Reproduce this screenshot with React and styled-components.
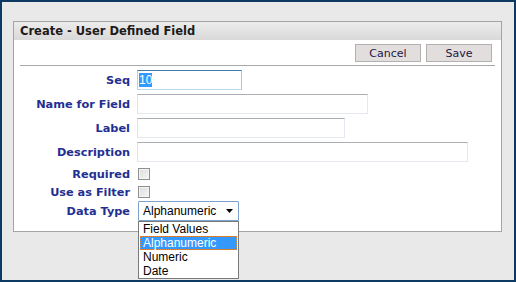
import React from "react";
import styled, { createGlobalStyle } from "styled-components";

const GlobalStyle = createGlobalStyle`
  html, body {
    margin: 0;
    padding: 0;
  }
  body {
    width: 516px;
    height: 282px;
    overflow: hidden;
  }
`;

const Frame = styled.div`
  box-sizing: border-box;
  width: 516px;
  height: 282px;
  border: 2px solid #0d3a62;
  background: #e9e9e9;
  padding: 19px 12px 0 11px;
`;

const Panel = styled.div`
  box-sizing: border-box;
  height: 211px;
  border: 1px solid #a4a4a4;
  background: #fff;
  font-family: "DejaVu Sans", Verdana, sans-serif;
`;

const TitleBar = styled.div`
  height: 18px;
  padding-left: 6px;
  display: flex;
  align-items: center;
  background: linear-gradient(#ececec, #d9d9d9);
  font-size: 11.5px;
  font-weight: bold;
  color: #1d1a17;
`;

const ButtonBar = styled.div`
  display: flex;
  justify-content: flex-end;
  gap: 5px;
  margin: 0 6px;
  padding: 4px 3px 3px 0;
  border-bottom: 1px solid #a8a8a8;
`;

const Button = styled.button`
  box-sizing: border-box;
  width: ${(p) => p.$w}px;
  height: 18px;
  padding: 0;
  border: 1px solid #b3b0b0;
  background: #e2dede;
  font-family: "DejaVu Sans", Verdana, sans-serif;
  font-size: 11px;
  color: #24163f;
`;

const Form = styled.div`
  display: flex;
  flex-direction: column;
  padding-top: 4px;
`;

const Row = styled.div`
  display: flex;
  align-items: center;
  height: ${(p) => p.$h}px;
  margin-top: ${(p) => p.$mt || 0}px;
`;

const Label = styled.div`
  width: 116px;
  margin-right: ${(p) => (p.$wide ? 8 : 7)}px;
  text-align: right;
  font-size: 11.3px;
  font-weight: bold;
  color: #1f3092;
`;

const TextBox = styled.input`
  box-sizing: border-box;
  width: ${(p) => p.$w}px;
  height: 20px;
  margin: 0;
  padding: 0 2px;
  border: 1px solid;
  border-color: #abadb3 #e3e9ef #e3e9ef #e2e3ea;
  outline: none;
  font-family: "Liberation Sans", Arial, sans-serif;
  font-size: 12px;
`;

const FocusBox = styled.div`
  box-sizing: border-box;
  width: ${(p) => p.$w}px;
  height: 20px;
  padding: 1px 1px;
  border: 1px solid;
  border-color: #3d7bad #a4c9e3 #b7d9ed #b5cfe7;
  display: flex;
  align-items: center;
  font-family: "Liberation Sans", Arial, sans-serif;
  font-size: 12px;
`;

const Selected = styled.span`
  background: #3399ff;
  color: #fff;
  line-height: 14px;
`;

const Check = styled.span`
  box-sizing: border-box;
  display: inline-block;
  width: 12px;
  height: 12px;
  border: 1px solid #8e8f8f;
  background: linear-gradient(135deg, #dcdcdc, #f6f6f6);
  box-shadow: inset 0 0 0 1px #f4f4f4;
`;

const SelectWrap = styled.div`
  position: relative;
`;

const SelectBox = styled.div`
  box-sizing: border-box;
  width: 101px;
  height: 20px;
  border: 1px solid #7da2ce;
  border-radius: 1px;
  display: flex;
  align-items: center;
  justify-content: space-between;
  padding: 0 5px 0 4px;
  font-family: "Liberation Sans", Arial, sans-serif;
  font-size: 12px;
  color: #000;
  background: #fff;
`;

const List = styled.div`
  position: absolute;
  top: 20px;
  left: 0;
  box-sizing: border-box;
  width: 101px;
  border: 1px solid #7a7a7a;
  background: #fff;
  padding: 0 1px;
  z-index: 2;
`;

const Option = styled.div`
  box-sizing: border-box;
  height: 14px;
  line-height: 12px;
  padding-left: 2px;
  font-family: "Liberation Sans", Arial, sans-serif;
  font-size: 12px;
  border: 1px dotted ${(p) => (p.$active ? "#e3873a" : "transparent")};
  background: ${(p) => (p.$active ? "#3399ff" : "#fff")};
  color: ${(p) => (p.$active ? "#fff" : "#000")};
`;

const options = ["Field Values", "Alphanumeric", "Numeric", "Date"];

export default function App() {
  return (
    <>
      <GlobalStyle />
      <Frame>
        <Panel>
          <TitleBar>Create - User Defined Field</TitleBar>
          <ButtonBar>
            <Button $w={66}>Cancel</Button>
            <Button $w={66}>Save</Button>
          </ButtonBar>
          <Form>
            <Row $h={20}>
              <Label>Seq</Label>
              <FocusBox $w={105}>
                <Selected>10</Selected>
              </FocusBox>
            </Row>
            <Row $h={20} $mt={4}>
              <Label>Name for Field</Label>
              <TextBox $w={231} readOnly />
            </Row>
            <Row $h={20} $mt={4}>
              <Label>Label</Label>
              <TextBox $w={208} readOnly />
            </Row>
            <Row $h={20} $mt={4}>
              <Label>Description</Label>
              <TextBox $w={331} readOnly />
            </Row>
            <Row $h={18} $mt={3}>
              <Label $wide>Required</Label>
              <Check />
            </Row>
            <Row $h={18}>
              <Label $wide>Use as Filter</Label>
              <Check />
            </Row>
            <Row $h={20}>
              <Label $wide>Data Type</Label>
              <SelectWrap>
                <SelectBox>
                  <span>Alphanumeric</span>
                  <svg width="7" height="4" viewBox="0 0 7 4">
                    <path d="M0 0h7L3.5 4z" fill="#000" />
                  </svg>
                </SelectBox>
                <List>
                  {options.map((o) => (
                    <Option key={o} $active={o === "Alphanumeric"}>
                      {o}
                    </Option>
                  ))}
                </List>
              </SelectWrap>
            </Row>
          </Form>
        </Panel>
      </Frame>
    </>
  );
}
